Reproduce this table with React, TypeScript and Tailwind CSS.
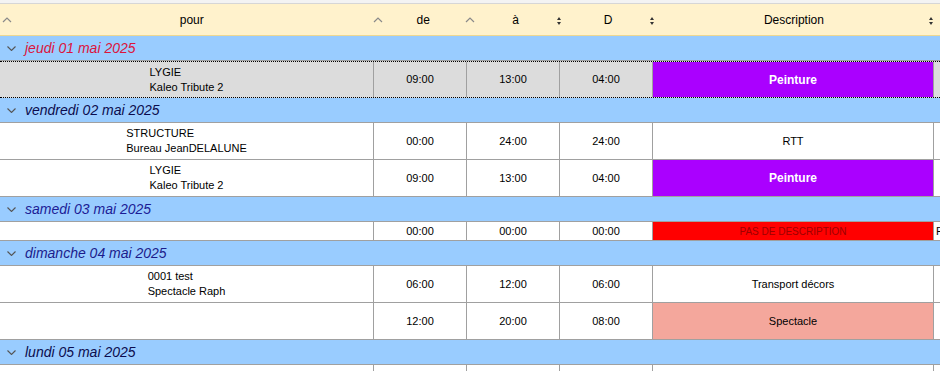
import React from "react";

type Row = {
  pour?: string[];
  de: string;
  a: string;
  d: string;
  desc: string;
  kind: "plain" | "peinture" | "none" | "spectacle";
  extra?: string;
  selected?: boolean;
  short?: boolean;
};

type Group = { label: string; color: string; rows: Row[] };

const groups: Group[] = [
  {
    label: "jeudi 01 mai 2025",
    color: "text-[#dc143c]",
    rows: [
      { pour: ["LYGIE", "Kaleo Tribute 2"], de: "09:00", a: "13:00", d: "04:00", desc: "Peinture", kind: "peinture", selected: true },
    ],
  },
  {
    label: "vendredi 02 mai 2025",
    color: "text-[#0c0c4e]",
    rows: [
      { pour: ["STRUCTURE", "Bureau JeanDELALUNE"], de: "00:00", a: "24:00", d: "24:00", desc: "RTT", kind: "plain" },
      { pour: ["LYGIE", "Kaleo Tribute 2"], de: "09:00", a: "13:00", d: "04:00", desc: "Peinture", kind: "peinture" },
    ],
  },
  {
    label: "samedi 03 mai 2025",
    color: "text-[#1c1c96]",
    rows: [{ de: "00:00", a: "00:00", d: "00:00", desc: "PAS DE DESCRIPTION", kind: "none", extra: "P", short: true }],
  },
  {
    label: "dimanche 04 mai 2025",
    color: "text-[#1c1c8c]",
    rows: [
      { pour: ["0001 test", "Spectacle Raph"], de: "06:00", a: "12:00", d: "06:00", desc: "Transport décors", kind: "plain" },
      { de: "12:00", a: "20:00", d: "08:00", desc: "Spectacle", kind: "spectacle" },
    ],
  },
  {
    label: "lundi 05 mai 2025",
    color: "text-[#0c0c4e]",
    rows: [{ de: "", a: "", d: "", desc: "", kind: "plain" }],
  },
];

const SortUp = () => (
  <svg width="10" height="6" viewBox="0 0 10 6" className="shrink-0">
    <path d="M1 5 L5 1 L9 5" fill="none" stroke="#8a8a8a" strokeWidth="1.2" />
  </svg>
);

const SortBoth = () => (
  <svg width="4" height="8" viewBox="0 0 4 8" className="shrink-0">
    <path d="M2 0 L4 3 L0 3 Z M2 8 L4 5 L0 5 Z" fill="#333" />
  </svg>
);

const Chevron = () => (
  <svg width="9" height="5" viewBox="0 0 9 5" className="shrink-0">
    <path d="M0.5 0.5 L4.5 4.5 L8.5 0.5" fill="none" stroke="#555" strokeWidth="1.1" />
  </svg>
);

const descClass = (kind: Row["kind"]) => {
  if (kind === "peinture") return "bg-[#aa00ff] text-white font-bold text-[12px]";
  if (kind === "none") return "bg-[#ff0000] text-[#9c0000] text-[10px]";
  if (kind === "spectacle") return "bg-[#f4a79c] text-black";
  return "";
};

const HeaderCell = ({ label, icon, width }: { label: string; icon: "up" | "both"; width: string }) => (
  <div className={`${width} relative flex items-center justify-center pl-[13px]`}>
    <div className="absolute left-[2px] top-[13px]">{icon === "up" ? <SortUp /> : <SortBoth />}</div>
    {label}
  </div>
);

const DataRow = ({ row }: { row: Row }) => {
  const h = row.short ? "h-[19px]" : "h-[37px]";
  const border = row.selected
    ? "border-y border-dotted border-black bg-[#dcdcdc]"
    : "border-b border-[#a0a0a0] bg-white";
  return (
    <div className={`flex ${h} ${border} text-[11px] text-black`}>
      <div className="w-[373px] flex items-center justify-center">
        {row.pour && (
          <div className="text-left leading-[15px]">
            {row.pour.map((l) => (
              <div key={l}>{l}</div>
            ))}
          </div>
        )}
      </div>
      <div className="w-[93px] border-l border-[#a0a0a0] flex items-center justify-center">{row.de}</div>
      <div className="w-[93px] border-l border-[#a0a0a0] flex items-center justify-center">{row.a}</div>
      <div className="w-[93px] border-l border-[#a0a0a0] flex items-center justify-center">{row.d}</div>
      <div className={`w-[281px] border-l border-[#a0a0a0] flex items-center justify-center ${descClass(row.kind)}`}>
        {row.desc}
      </div>
      <div className="flex-1 border-l border-[#a0a0a0] flex items-center pl-[2px] overflow-hidden">{row.extra}</div>
    </div>
  );
};

export default function App() {
  return (
    <div className="w-[940px] h-[371px] overflow-hidden bg-white font-['Liberation_Sans',Arial,sans-serif]">
      <div className="h-[4px] bg-[#f3f3f3] border-b border-[#d6d6d6]" />
      <div className="flex h-[32px] bg-[#fff2cc] border-b border-[#eed891] text-[12px] text-black">
        <HeaderCell label="pour" icon="up" width="w-[373px]" />
        <HeaderCell label="de" icon="up" width="w-[93px]" />
        <HeaderCell label="à" icon="up" width="w-[93px]" />
        <HeaderCell label="D" icon="both" width="w-[93px]" />
        <HeaderCell label="Description" icon="both" width="w-[281px]" />
        <HeaderCell label="" icon="both" width="flex-1" />
      </div>
      {groups.map((g) => (
        <div key={g.label}>
          <div className="h-[25px] bg-[#99ccff] border-b border-[#a0a0a0] flex items-center">
            <div className="w-[25px] pl-[7px] flex items-center">
              <Chevron />
            </div>
            <span className={`italic text-[14px] ${g.color}`}>{g.label}</span>
          </div>
          {g.rows.map((r, i) => (
            <DataRow key={i} row={r} />
          ))}
        </div>
      ))}
    </div>
  );
}
